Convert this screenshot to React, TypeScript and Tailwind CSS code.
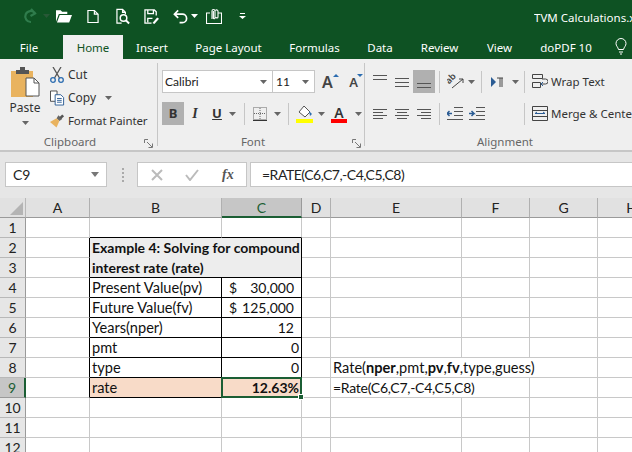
import type { ReactNode } from "react";

const CALIBRI = "font-['Lato','Liberation_Sans',sans-serif]";
const SEGOE = "font-['Noto_Sans','Open_Sans',sans-serif]";

const tabs: [string, string][] = [
	["Insert", "w-[58px]"],
	["Page Layout", "w-[95px]"],
	["Formulas", "w-[77px]"],
	["Data", "w-[54px]"],
	["Review", "w-[65px]"],
	["View", "w-[55px]"],
	["doPDF 10", "w-[78px]"],
];

const Caret = ({ className = "" }: { className?: string }) => (
	<svg width="7" height="4" viewBox="0 0 7 4" className={`shrink-0 ${className}`}>
		<path d="M0 0h7L3.5 4z" fill="#666" />
	</svg>
);

const Lines = ({ rows }: { rows: [number, number, number][] }) => (
	<svg width="16" height="16" viewBox="0 0 16 16" fill="none" stroke="#555" strokeWidth="1" className="shrink-0">
		{rows.map(([y, a, b]) => (
			<path key={y} d={`M${a} ${y + 0.5}H${b}`} />
		))}
	</svg>
);

const Sep = ({ className = "h-[22px]" }: { className?: string }) => <div className={`w-px shrink-0 bg-[#c6c6c6] ${className}`} />;

const GroupLabel = ({ children, className = "" }: { children: ReactNode; className?: string }) => (
	<div className={`${SEGOE} text-center text-[11.5px] leading-4 text-[#666] ${className}`}>{children}</div>
);

const Launcher = ({ className = "" }: { className?: string }) => (
	<svg width="9" height="9" viewBox="0 0 9 9" fill="none" stroke="#777" className={`absolute bottom-[2px] ${className}`}>
		<path d="M.5 4V.5H4M8 8 3 3M8.5 4.5v4h-4" />
	</svg>
);

function QuickAccess() {
	return (
		<div className="flex h-[35px] items-start bg-[#0e5223] pt-[7px]">
			<div className="flex w-[530px] shrink-0 items-center pl-[21px]">
				<svg width="16" height="18" viewBox="0 0 16 18" fill="none" stroke="#2f7c4c" strokeWidth="2.2" className="shrink-0">
					<path d="M14 6A5.5 5.5 0 1 0 10 15M10 2l4 4.5L9.5 9" />
				</svg>
				<Caret className="ml-[6px] opacity-30" />
				<svg width="16" height="14" viewBox="0 0 17 14" fill="#fff" className="ml-[6px]">
					<path d="M0 3V1h5l1.500 1.500H12V5H3L0 13zM4 6h13l-3 8H1z" />
				</svg>
				<svg width="12" height="15" viewBox="0 0 13 15" fill="none" stroke="#fff" strokeWidth="1.300" className="ml-[15px]">
					<path d="M1 1h7l4 4v9H1zM8 1v4h4" />
				</svg>
				<svg width="15" height="17" viewBox="0 0 16 17" fill="none" stroke="#fff" strokeWidth="1.300" className="ml-[17px]">
					<path d="M6 15.500H1V1h6l3 3v2M7 1v3h3" />
					<circle cx="8" cy="10" r="3.500" strokeWidth="1.600" />
					<path d="m10.500 12.500 3.500 3.500" strokeWidth="2" />
				</svg>
				<svg width="16" height="15" viewBox="0 0 17 16" fill="none" stroke="#fff" strokeWidth="1.400" className="ml-[13px]">
					<path d="M8 15H1V1h10l2 2v4M4 1v4h6V1M4 14v-4h5" />
					<path d="m9 15 5-6 2 1.500-5 5.500z" fill="#fff" stroke="none" />
				</svg>
				<svg width="15" height="15" viewBox="0 0 16 15" fill="none" stroke="#fff" strokeWidth="1.800" className="ml-[13px]">
					<path d="M5.500 1 1.500 5l4 4M2 5h8a4.500 4.500 0 0 1 0 9H7" />
				</svg>
				<Caret className="ml-[3px] [&>path]:fill-white" />
				<svg width="16" height="16" viewBox="0 0 16 16" fill="none" stroke="#fff" strokeWidth="1.100" className="ml-[8px]">
					<path d="M4 5H.5v10.500h15V5H12M6 11V3a1.500 1.500 0 0 1 3 0v7a.8.8 0 0 1-1.600 0V3M9.500 2.500a1.400 1.400 0 0 1 2.500 1V9a1 1 0 0 1-2 0" />
				</svg>
				<svg width="7" height="6" viewBox="0 0 7 6" className="ml-[17px]" fill="#fff">
					<path d="M1 0h5v1H1zM0 3h7L3.500 6z" />
				</svg>
			</div>
			<div className={`${SEGOE} ml-[4px] overflow-hidden whitespace-nowrap pt-[2px] text-[11.5px] leading-[18px] text-white`}>
				TVM Calculations.xlsx - Excel
			</div>
		</div>
	);
}

function Tabs() {
	return (
		<div className={`${SEGOE} flex h-[24px] bg-[#0e5223] pb-0 text-[11.5px] text-white`}>
			<div className="flex w-[63px] items-center justify-center pr-[5px] pt-px">File</div>
			<div className="flex w-[60px] items-center justify-center bg-[#efefef] pt-px text-[#0e5223]">Home</div>
			{tabs.map(([name, width]) => (
				<div key={name} className={`flex items-center justify-center pt-px ${width}`}>
					{name}
				</div>
			))}
			<svg width="12" height="17" viewBox="0 0 12 17" fill="none" stroke="#fff" strokeWidth="1" className="ml-[10px] mt-[3px]">
				<path d="M3.500 11.500C3 9 1 8 1 5.500a5 5 0 0 1 10 0C11 8 9 9 8.500 11.500zM4 14h4M5 16h2" />
			</svg>
		</div>
	);
}

function Clipboard() {
	return (
		<div className="relative flex w-[157px] shrink-0 flex-col">
			<div className="flex h-[76px]">
				<div className="flex w-[50px] flex-col items-center pt-[8px]">
					<svg width="29" height="30" viewBox="0 0 29 30">
						<path d="M0 4h22v26H0z" fill="#e9b35f" />
						<path d="M5 3h4V0h5v3h4v4H5z" fill="#555" />
						<path d="M15 11h8l5 5v13H15z" fill="#fff" stroke="#555" />
						<path d="M23 11v5h5" fill="none" stroke="#555" />
					</svg>
					<div className={`${SEGOE} mt-[3px] text-[12px] leading-4 text-[#333]`}>Paste</div>
					<Caret className="mt-[5px]" />
				</div>
				<div className={`${SEGOE} flex flex-col pt-[4px] text-[12px] text-[#333]`}>
					<div className="flex h-[23px] items-center gap-[4px]">
						<svg width="14" height="16" viewBox="0 0 14 16" fill="none" strokeWidth="1.300" className="shrink-0">
							<path d="M3 0l6.500 11M11 0 4.500 11" stroke="#555" />
							<circle cx="3" cy="13" r="2.300" stroke="#2b6cb0" />
							<circle cx="11" cy="13" r="2.300" stroke="#2b6cb0" />
						</svg>
						Cut
					</div>
					<div className="flex h-[23px] items-center">
						<svg width="15" height="16" viewBox="0 0 16 16" fill="#fff" stroke="#444" className="mr-[3px] shrink-0">
							<path d="M.5.500h7v11h-7z" />
							<path d="M5.500 4.500h6l3 3v8h-9zM7.500 8.500h5M7.500 10.500h5M7.500 12.500h5" stroke="#2b5c94" />
						</svg>
						Copy
						<Caret className="ml-[9px]" />
					</div>
					<div className="flex h-[23px] items-center gap-[3px] whitespace-nowrap text-[11.5px] tracking-[-0.1px]">
						<svg width="15" height="15" viewBox="0 0 16 15" className="shrink-0">
							<path d="M9 2l4 4-3 2-3-3z" fill="#666" />
							<path d="M7 5l3 3-3 7-7-6z" fill="#e9b35f" />
							<path d="M10 4l3-3 2 2-3 3z" fill="#555" />
						</svg>
						Format Painter
					</div>
				</div>
			</div>
			<GroupLabel className="pr-[17px]">Clipboard</GroupLabel>
			<Launcher className="right-[4px]" />
		</div>
	);
}

function Font() {
	return (
		<div className="relative flex w-[206px] shrink-0 flex-col pl-[4px]">
			<div className="flex h-[76px] flex-col pt-[11px]">
				<div className="flex h-[23px] items-center">
					<div className={`${CALIBRI} flex h-[23px] w-[111px] items-center justify-between border border-[#c6c6c6] bg-white pl-[2px] pr-[5px] text-[12px] text-[#222]`}>
						Calibri
						<Caret />
					</div>
					<div className={`${CALIBRI} flex h-[23px] w-[42px] items-center justify-between border border-l-0 border-[#c6c6c6] bg-white pl-[3px] pr-[5px] text-[12px] text-[#222]`}>
						11
						<Caret />
					</div>
					<div className={`${SEGOE} ml-[7px] flex w-[36px] items-end justify-between font-semibold text-[#444]`}>
						<span className="relative text-[16px] leading-4">
							A
							<span className="absolute -right-[6px] top-0 h-0 w-0 border-x-[3px] border-b-[3px] border-x-transparent border-b-[#2b6cb0]" />
						</span>
						<span className="relative text-[13px] leading-4">
							A
							<span className="absolute -right-[5px] top-0 h-0 w-0 border-x-[3px] border-t-[3px] border-x-transparent border-t-[#2b6cb0]" />
						</span>
					</div>
				</div>
				<div className={`mt-[9px] flex h-[23px] items-center ${SEGOE} text-[13px] text-[#333]`}>
					<div className="flex h-[23px] w-[22px] items-center justify-center bg-[#b0b0b0] font-bold">B</div>
					<div className="flex w-[22px] items-center justify-center font-['Liberation_Serif',serif] font-bold italic text-[14px]">I</div>
					<div className="flex w-[22px] items-center justify-center font-bold underline">U</div>
					<Caret className="mr-[8px] ml-[1px]" />
					<Sep />
					<svg width="14" height="14" viewBox="0 0 14 14" fill="none" stroke="#666" strokeDasharray="1 1" className="ml-[8px]">
						<path d="M.5.500h13v12h-13zM7 1v12M1 6.500h12" />
						<path d="M0 13.500h14" strokeDasharray="none" stroke="#333" />
					</svg>
					<Caret className="ml-[7px]" />
					<Sep className="ml-[7px] h-[22px]" />
					<svg width="17" height="18" viewBox="0 0 17 18" className="ml-[7px]">
						<path d="M3 7l5-6 6 6-5 5z" fill="#fff" stroke="#555" />
						<path d="M13 6l3 3-2 2z" fill="#2b6cb0" />
						<path d="M0 14h17v4H0z" fill="#ffff00" />
					</svg>
					<Caret className="ml-[5px]" />
					<div className="relative ml-[6px] flex h-[18px] w-[16px] flex-col items-center">
						<span className="text-[14px] font-semibold leading-[15px]">A</span>
						<span className="absolute bottom-0 h-[4px] w-[16px] bg-[#ff0000]" />
					</div>
					<Caret className="ml-[8px]" />
				</div>
			</div>
			<GroupLabel className="pr-[20px]">Font</GroupLabel>
			<Launcher className="right-[3px]" />
		</div>
	);
}

function Alignment() {
	return (
		<div className="flex flex-1 flex-col overflow-hidden">
			<div className={`${SEGOE} flex h-[76px] whitespace-nowrap text-[11.5px] text-[#333]`}>
				<div className="flex w-[74px] shrink-0 flex-col pt-[11px]">
					<div className="flex h-[23px] items-center pl-[8px]">
						<Lines rows={[[1, 0, 14], [5, 0, 14]]} />
						<div className="ml-[6px]"><Lines rows={[[4, 0, 14], [8, 0, 14], [12, 0, 14]]} /></div>
						<div className="ml-[2px] flex h-[23px] w-[22px] items-center justify-center bg-[#b0b0b0]">
							<Lines rows={[[9, 1, 15], [13, 1, 15]]} />
						</div>
					</div>
					<div className="mt-[9px] flex h-[23px] items-center pl-[8px]">
						<Lines rows={[[3, 0, 14], [6, 0, 10], [9, 0, 14], [12, 0, 10]]} />
						<div className="ml-[6px]"><Lines rows={[[3, 0, 14], [6, 2, 12], [9, 0, 14], [12, 2, 12]]} /></div>
						<div className="ml-[6px]"><Lines rows={[[3, 0, 14], [6, 4, 14], [9, 0, 14], [12, 4, 14]]} /></div>
					</div>
				</div>
				<div className="flex shrink-0 flex-col pt-[11px]">
					<div className="flex h-[23px] items-center">
						<Sep />
						<svg width="18" height="17" viewBox="0 0 18 17" fill="none" stroke="#444" className="ml-[7px]">
							<text x="0" y="9" transform="rotate(-45 4 8)" fontSize="9" fontWeight="600" fill="#444" stroke="none">ab</text>
							<path d="M5 15 16 6M16 6h-4M16 6v4" />
						</svg>
						<Caret className="ml-[3px]" />
						<Sep className="ml-[6px] h-[22px]" />
						<svg width="12" height="10" viewBox="0 0 12 10" className="ml-[9px]">
							<path d="M0 0l5 5-5 5z" fill="#2b5c94" />
							<path d="M6 1h6M9 1v9M11 1v9" stroke="#444" />
						</svg>
						<Caret className="ml-[9px]" />
					</div>
					<div className="mt-[9px] flex h-[23px] items-center">
						<Sep />
						<svg width="16" height="13" viewBox="0 0 16 13" fill="none" stroke="#555" className="ml-[7px]">
							<path d="M7 .5h9M7 4.500h9M7 8.500h9M0 12.500h16" />
							<path d="M5 6.500H0l2.500-2.500M0 6.500 2.500 9" stroke="#2b5c94" strokeWidth="1.500" />
						</svg>
						<svg width="16" height="13" viewBox="0 0 16 13" fill="none" stroke="#555" className="ml-[6px]">
							<path d="M7 .5h9M7 4.500h9M7 8.500h9M0 12.500h16" />
							<path d="M0 6.500h5L2.500 4M5 6.500 2.500 9" stroke="#2b5c94" strokeWidth="1.500" />
						</svg>
					</div>
				</div>
				<div className="ml-[5px] flex flex-col pt-[11px]">
					<div className="flex h-[23px] items-center">
						<Sep />
						<svg width="16" height="15" viewBox="0 0 16 15" fill="none" stroke="#444" className="ml-[7px] mr-[3px]">
							<path d="M.5.500h10v4H.5zM.5 8.500h8v5H.5zM10 10h3.500a1.500 1.500 0 0 0 0-5H10" />
							<path d="M9 10l2-2M9 10l2 2" stroke="#2b5c94" />
						</svg>
						Wrap Text
					</div>
					<div className="mt-[9px] flex h-[23px] items-center">
						<Sep />
						<svg width="16" height="15" viewBox="0 0 16 15" fill="none" stroke="#444" className="ml-[7px] mr-[3px]">
							<path d="M.5.500h15v14H.5zM.5 4.500h15M.5 10.500h15" />
							<path d="M3 7.500h10M3 7.500l2-1.500M13 7.500l-2-1.500" stroke="#2b5c94" />
						</svg>
						Merge &amp; Center
					</div>
				</div>
			</div>
			<div className="w-[280px]"><GroupLabel>Alignment</GroupLabel></div>
		</div>
	);
}

function FormulaBar() {
	return (
		<div className={`${CALIBRI} flex h-[46px] items-start bg-[#e6e6e6] pl-[5px] pt-[10px] text-[14px] text-[#222]`}>
			<div className="flex h-[25px] w-[102px] items-center justify-between border border-[#c6c6c6] bg-white pl-[7px] pr-[7px]">
				C9
				<svg width="8" height="5" viewBox="0 0 8 5"><path d="M0 0h8L4 5z" fill="#777" /></svg>
			</div>
			<div className="flex h-[25px] w-[30px] flex-col items-center justify-center gap-[2px] pl-[1px]">
				<span className="h-[2px] w-[2px] bg-[#aaa]" />
				<span className="h-[2px] w-[2px] bg-[#aaa]" />
				<span className="h-[2px] w-[2px] bg-[#aaa]" />
				<span className="h-[2px] w-[2px] bg-[#aaa]" />
			</div>
			<div className="flex h-[25px] w-[110px] items-center border border-[#c6c6c6] bg-white">
				<svg width="12" height="12" viewBox="0 0 12 12" fill="none" stroke="#bbb" strokeWidth="2" className="ml-[13px]">
					<path d="M1 1l10 10M11 1 1 11" />
				</svg>
				<svg width="14" height="12" viewBox="0 0 14 12" fill="none" stroke="#bbb" strokeWidth="2" className="ml-[22px]">
					<path d="M1 6l4 5 8-10" />
				</svg>
				<span className="ml-[23px] font-['Liberation_Serif',serif] text-[14px] font-bold italic text-[#555]">fx</span>
			</div>
			<div className="ml-[3px] flex h-[25px] flex-1 items-center border border-r-0 border-[#c6c6c6] bg-white pl-[11px] tracking-[-0.5px]">
				=RATE(C6,C7,-C4,C5,C8)
			</div>
		</div>
	);
}

const COLS = ["A", "B", "C", "D", "E", "F", "G", "H"];
const GRID = "border-b border-r border-[#c8c8c8]";
const ACCOUNT = "flex items-center justify-between pl-[7px] pr-[7px]";

function Sheet() {
	const rowNums = Array.from({ length: 12 }, (_, i) => i + 1);

	const body = (r: number): ReactNode => {
		const boxed = r >= 2 && r <= 9;
		const a = <div key="a" className={`border-b border-r border-b-[#c8c8c8] ${boxed ? "border-r-black" : "border-r-[#c8c8c8]"}`} />;
		const plain = (key: string) => <div key={key} className={GRID} />;
		const tail = (() => {
			if (r === 8)
				return [
					<div key="e" className={`col-span-3 flex items-center whitespace-nowrap pl-[2px] text-[14.6px] ${GRID}`}>
						<span>
							Rate(<b>nper</b>,pmt,<b>pv</b>,<b>fv</b>,type,guess)
						</span>
					</div>,
				];
			if (r === 9)
				return [
					<div key="e" className={`col-span-2 flex items-center whitespace-nowrap pl-[2px] tracking-[-0.27px] ${GRID}`}>
						=Rate(C6,C7,-C4,C5,C8)
					</div>,
					plain("g"),
				];
			return [plain("e"), plain("f"), plain("g")];
		})();
		const cellB = "flex items-center border-b border-r border-black pl-[2px] text-[14.6px]";
		let mid: ReactNode[] = [];
		if (r === 1)
			mid = [
				<div key="b" className="border-b border-r border-b-black border-r-[#c8c8c8]" />,
				<div key="c" className="border-b border-r border-b-black border-r-[#c8c8c8]" />,
			];
		else if (r === 2)
			mid = [
				<div key="b" className="col-span-2 row-span-2 border-b border-r border-black bg-[#ededed] pl-[2px] font-bold leading-[20px]">
					Example 4: Solving for compound
					<br />
					interest rate (rate)
				</div>,
			];
		else if (r === 4)
			mid = [
				<div key="b" className={cellB}>Present Value(pv)</div>,
				<div key="c" className={`border-b border-r border-black ${ACCOUNT}`}><span>$</span><span>30,000</span></div>,
			];
		else if (r === 5)
			mid = [
				<div key="b" className={cellB}>Future Value(fv)</div>,
				<div key="c" className={`border-b border-r border-black ${ACCOUNT}`}><span>$</span><span>125,000</span></div>,
			];
		else if (r === 6)
			mid = [
				<div key="b" className={cellB}>Years(nper)</div>,
				<div key="c" className="flex items-center justify-end border-b border-r border-black pr-[7px]">12</div>,
			];
		else if (r === 7 || r === 8)
			mid = [
				<div key="b" className={cellB}>{r === 7 ? "pmt" : "type"}</div>,
				<div key="c" className="flex items-center justify-end border-b border-r border-black pr-[2px]">0</div>,
			];
		else if (r === 9)
			mid = [
				<div key="b" className={`${cellB} bg-[#f8dbc8]`}>rate</div>,
				<div key="c" className="relative flex items-center justify-end border-b border-r border-black bg-[#f8dbc8] pr-[2px] font-bold">
					12.63%
					<div className="absolute -bottom-px -left-px -right-px -top-px border-2 border-[#1b5e34]" />
					<div className="absolute -bottom-[3px] -right-[3px] h-[6px] w-[6px] border border-white bg-[#1b5e34]" />
				</div>,
			];
		else if (r > 9) mid = [plain("b"), plain("c")];
		return [a, ...mid, plain("d"), ...tail, plain("h")];
	};

	return (
		<div className={`${CALIBRI} flex-1 overflow-hidden bg-white text-[14px] text-[#111]`}>
			<div className="grid grid-cols-[26px_64px_132px_80px_29px_131px_68px_68px_68px] grid-rows-[20px] auto-rows-[20px]">
				<div className="flex items-end justify-end border-b border-r border-b-[#9a9a9a] border-r-[#b8b8b8] bg-[#e1e1e1] p-[2px]">
					<svg width="13" height="13" viewBox="0 0 13 13"><path d="M13 0v13H0z" fill="#b4b4b4" /></svg>
				</div>
				{COLS.map((c) => (
					<div
						key={c}
						className={
							c === "C"
								? "flex items-center justify-center border-b-2 border-r border-b-[#1b5e34] border-r-[#9a9a9a] bg-[#c6c6c6] text-[#1b5e34]"
								: "flex items-center justify-center border-b border-r border-b-[#9a9a9a] border-r-[#b0b0b0] bg-[#e1e1e1] text-[#222]"
						}
					>
						{c}
					</div>
				))}
				{rowNums.map((r) => (
					<div key={r} className="contents">
						<div
							className={
								r === 9
									? "flex items-center justify-center border-b border-r-2 border-b-[#9a9a9a] border-r-[#1b5e34] bg-[#c6c6c6] text-[#1b5e34]"
									: "flex items-center justify-center border-b border-r border-b-[#b8b8b8] border-r-[#9a9a9a] bg-[#e6e6e6] text-[#222]"
							}
						>
							{r}
						</div>
						{body(r)}
					</div>
				))}
			</div>
		</div>
	);
}

export default function App() {
	return (
		<div className="flex h-[452px] w-[632px] flex-col overflow-hidden bg-white">
			<QuickAccess />
			<Tabs />
			<div className="flex h-[93px] border-b-2 border-[#c6c6c6] bg-[#efefef]">
				<Clipboard />
				<div className="my-[4px] w-px bg-[#c6c6c6]" />
				<Font />
				<div className="my-[4px] w-px bg-[#c6c6c6]" />
				<Alignment />
			</div>
			<FormulaBar />
			<Sheet />
		</div>
	);
}
